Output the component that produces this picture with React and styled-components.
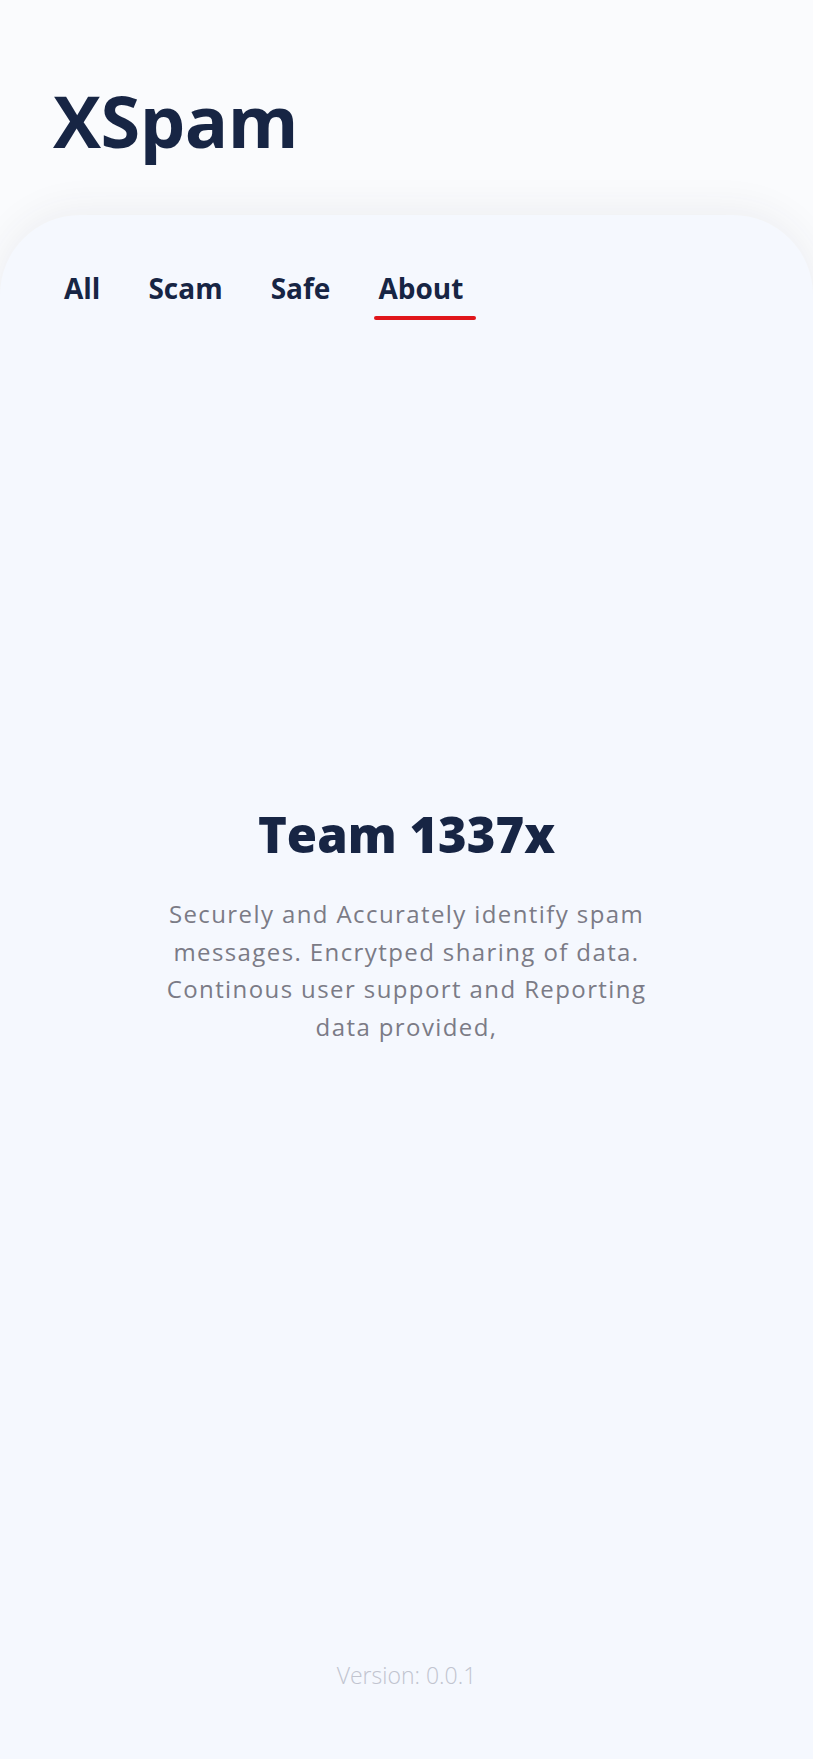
import React, { useState } from "react"
import styled, { createGlobalStyle } from "styled-components"

const NAVY = "#172544"
const RED = "#e0161b"
const GREY = "#7b7b86"
const LIGHT = "#c1c4cf"
const SANS = `"Open Sans", "Noto Sans", sans-serif`

const GlobalStyle = createGlobalStyle`
  html, body {
    margin: 0;
    padding: 0;
    background: #fafbfd;
  }
  * { box-sizing: border-box; }
`

const Page = styled.div`
  min-height: 1759px;
  display: flex;
  flex-direction: column;
  overflow: hidden;
`

const Header = styled.header`
  padding: 76px 0 0 53px;
  height: 215px;
`

const Title = styled.h1`
  margin: 0;
  font-family: ${SANS};
  font-weight: 700;
  font-size: 72px;
  line-height: 88px;
  letter-spacing: -0.5px;
  color: ${NAVY};
`

const Card = styled.main`
  flex: 1;
  display: flex;
  flex-direction: column;
  background: #f5f8fe;
  border-radius: 80px 80px 0 0;
  box-shadow: 0 -4px 40px rgba(60, 60, 70, 0.07);
`

const Tabs = styled.nav`
  display: flex;
  gap: 48px;
  padding: 53px 0 0 64px;
`

const Tab = styled.button`
  position: relative;
  border: none;
  background: none;
  padding: 0;
  cursor: pointer;
  font-family: ${SANS};
  font-weight: 700;
  font-size: 28px;
  line-height: 40px;
  color: ${NAVY};

  &::after {
    content: "";
    display: ${p => (p.$active ? "block" : "none")};
    position: absolute;
    left: -4px;
    right: -13px;
    bottom: -12px;
    height: 4px;
    border-radius: 2px;
    background: ${RED};
  }
`

const About = styled.section`
  flex: 1;
  display: flex;
  flex-direction: column;
  align-items: center;
  padding-top: 494px;
`

const Team = styled.h2`
  margin: 0;
  font-family: ${SANS};
  font-weight: 800;
  font-size: 49px;
  line-height: 64px;
  color: ${NAVY};
`

const Blurb = styled.p`
  margin: 29px 0 0;
  width: 520px;
  text-align: center;
  font-family: ${SANS};
  font-weight: 400;
  font-size: 24px;
  line-height: 37.5px;
  letter-spacing: 1.4px;
  color: ${GREY};
`

const Version = styled.footer`
  padding-bottom: 69px;
  text-align: center;
  font-family: ${SANS};
  font-weight: 300;
  font-size: 23px;
  line-height: 30px;
  color: ${LIGHT};
`

const TABS = ["All", "Scam", "Safe", "About"]

export default function App() {
  const [active, setActive] = useState("About")
  return (
    <Page>
      <GlobalStyle />
      <Header>
        <Title>XSpam</Title>
      </Header>
      <Card>
        <Tabs>
          {TABS.map(t => (
            <Tab key={t} $active={t === active} onClick={() => setActive(t)}>
              {t}
            </Tab>
          ))}
        </Tabs>
        <About>
          <Team>Team 1337x</Team>
          <Blurb>
            Securely and Accurately identify spam messages. Encrytped sharing
            of data. Continous user support and Reporting data provided,
          </Blurb>
        </About>
        <Version>Version: 0.0.1</Version>
      </Card>
    </Page>
  )
}
